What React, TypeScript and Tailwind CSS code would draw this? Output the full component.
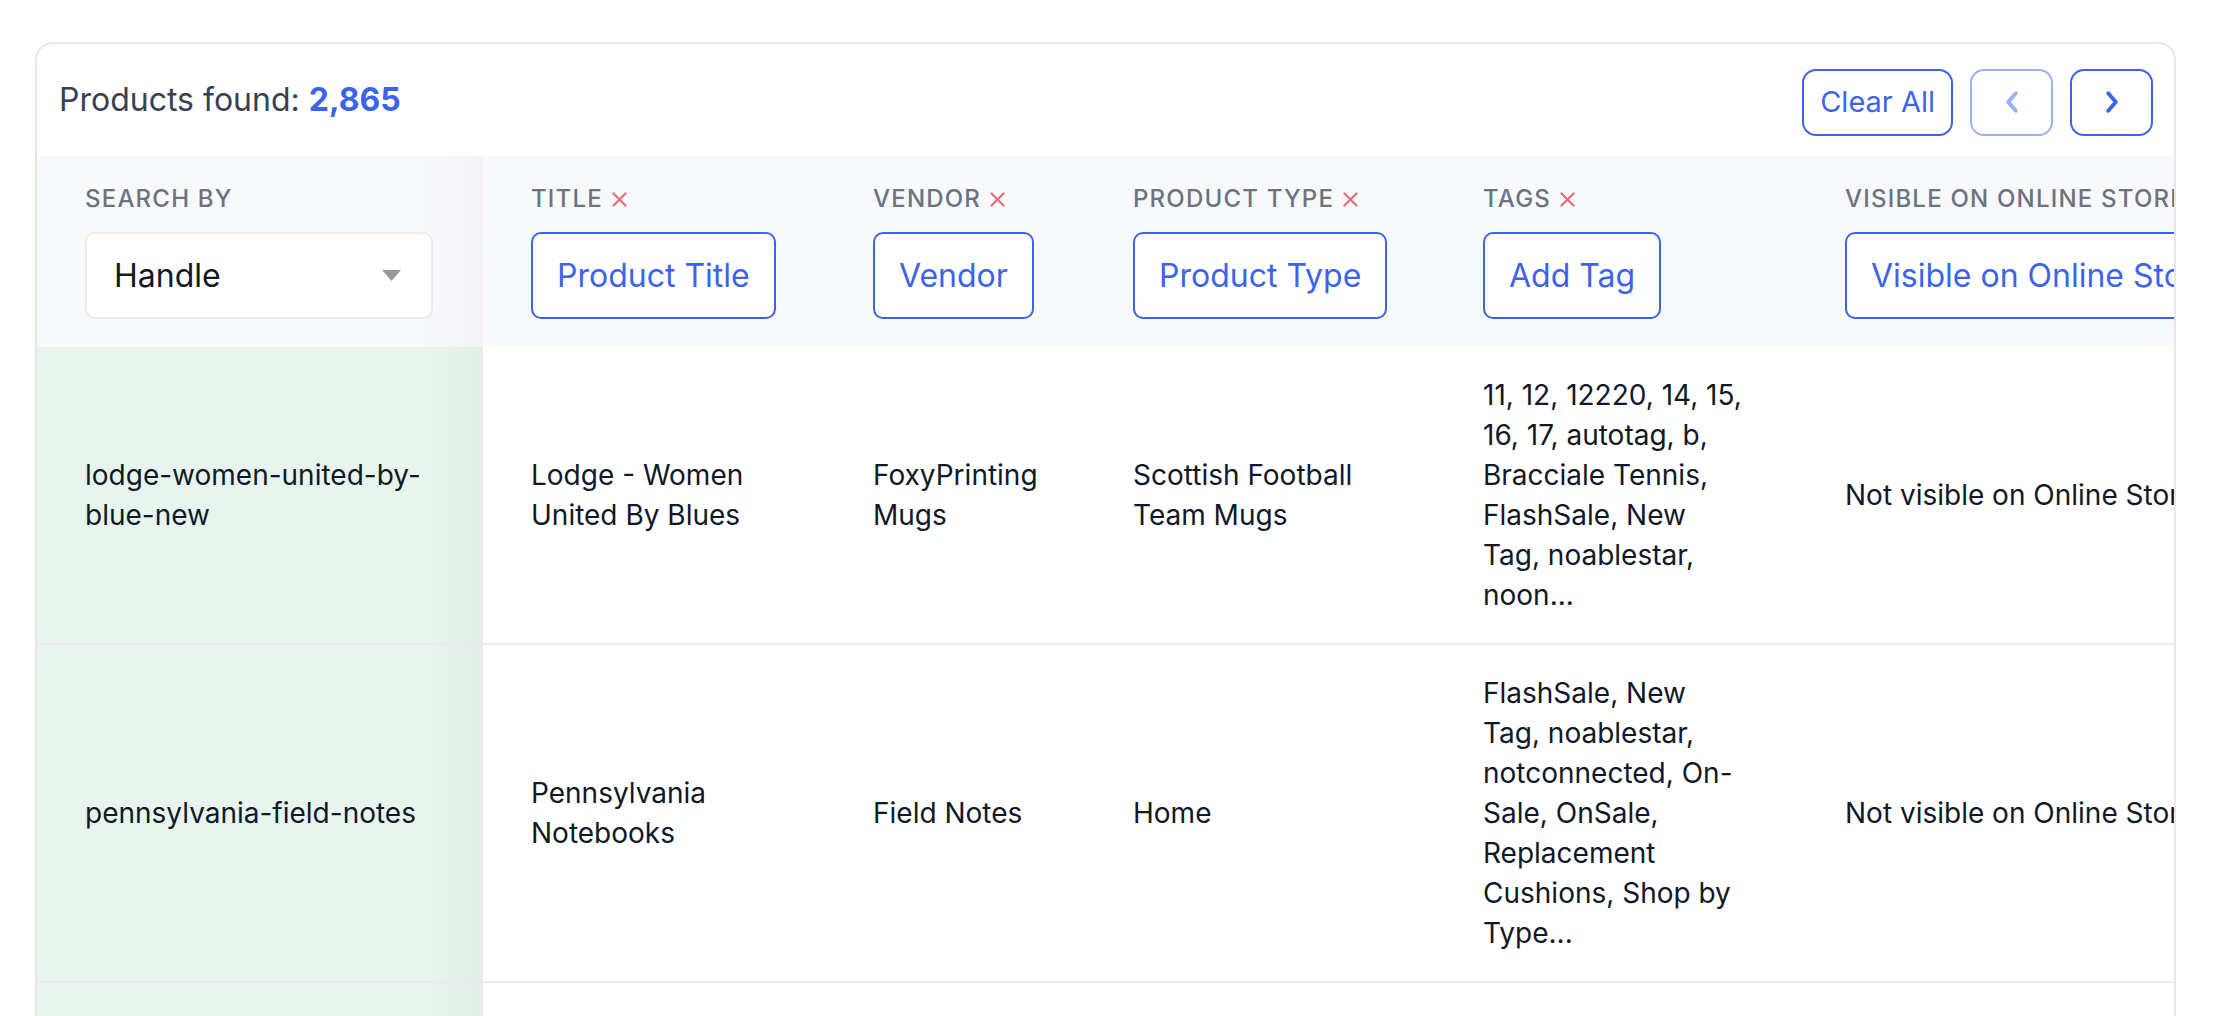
import React from "react";

const BLUE = "#3d63ea";

function Chevron({ dir }: { dir: "left" | "right" }) {
  return (
    <svg width="16" height="26" viewBox="0 0 14 24" fill="none">
      <path
        d={dir === "left" ? "M10.5 4 L3.5 12 L10.5 20" : "M3.5 4 L10.5 12 L3.5 20"}
        stroke={BLUE}
        strokeWidth="3.6"
        strokeLinecap="round"
        strokeLinejoin="round"
      />
    </svg>
  );
}

function HeadLabel({ text, removable = true }: { text: string; removable?: boolean }) {
  return (
    <div className="flex items-center gap-[9px] text-[24px] leading-[32px] font-medium tracking-[0.05em] text-[#6b7280] uppercase whitespace-nowrap mb-[17px]">
      <span>{text}</span>
      {removable && (
        <svg width="15" height="15" viewBox="0 0 15 15" className="mt-[1px]">
          <path d="M1.5 1.5 L13.5 13.5 M13.5 1.5 L1.5 13.5" stroke="#e36d7d" strokeWidth="2.2" strokeLinecap="round" />
        </svg>
      )}
    </div>
  );
}

function FilterButton({ text }: { text: string }) {
  return (
    <div className="inline-flex items-center h-[87px] px-[24px] border-2 border-[#3d63ea] rounded-[10px] bg-white text-[32px] text-[#3d63ea] whitespace-nowrap">
      {text}
    </div>
  );
}

const rows = [
  {
    handle: "lodge-women-united-by-blue-new",
    title: "Lodge - Women United By Blues",
    vendor: "FoxyPrinting Mugs",
    type: "Scottish Football Team Mugs",
    tags: "11, 12, 12220, 14, 15, 16, 17, autotag, b, Bracciale Tennis, FlashSale, New Tag, noablestar, noon...",
    visible: "Not visible on Online Store",
  },
  {
    handle: "pennsylvania-field-notes",
    title: "Pennsylvania Notebooks",
    vendor: "Field Notes",
    type: "Home",
    tags: "FlashSale, New Tag, noablestar, notconnected, On-Sale, OnSale, Replacement Cushions, Shop by Type...",
    visible: "Not visible on Online Store",
  },
  {
    handle: "classic-leather-tote",
    title: "Classic Leather Tote",
    vendor: "Field Notes",
    type: "Bags",
    tags: "FlashSale, New Tag",
    visible: "Not visible on Online Store",
  },
];

export default function App() {
  return (
    <div className="min-h-screen w-[2216px] bg-white pt-[42px] font-['Inter','Noto_Sans',sans-serif]">
      <div className="ml-[35px] w-[2141px] h-[1100px] border-2 border-[#e7e7ea] rounded-[18px] overflow-hidden bg-white">
        <div className="h-[112px] flex items-center justify-between pl-[22px] pr-[21px]">
          <div className="text-[32px] text-[#374151]">
            Products found: <span className="font-bold text-[#3d63ea]">2,865</span>
          </div>
          <div className="flex items-center gap-[17px] pt-[4px]">
            <div className="h-[67px] px-[16px] flex items-center border-2 border-[#3d63ea] rounded-[14px] text-[29px] text-[#3d63ea]">
              Clear All
            </div>
            <div className="h-[67px] w-[83px] flex items-center justify-center border-2 border-[#3d63ea] rounded-[14px] opacity-50">
              <Chevron dir="left" />
            </div>
            <div className="h-[67px] w-[83px] flex items-center justify-center border-2 border-[#3d63ea] rounded-[14px]">
              <Chevron dir="right" />
            </div>
          </div>
        </div>
        <table className="table-fixed border-collapse w-[2400px]">
          <colgroup>
            <col className="w-[446px]" />
            <col className="w-[342px]" />
            <col className="w-[260px]" />
            <col className="w-[350px]" />
            <col className="w-[362px]" />
            <col className="w-[640px]" />
          </colgroup>
          <thead>
            <tr className="bg-[#f8f9fb]">
              <th className="relative text-left align-top px-[48px] pt-[27px] pb-[28px] font-normal">
                <HeadLabel text="Search by" removable={false} />
                <div className="h-[87px] w-[348px] flex items-center justify-between pl-[27px] pr-[30px] bg-white border-2 border-[#ececee] rounded-[10px]">
                  <span className="text-[32px] text-[#111827]">Handle</span>
                  <svg width="19" height="11" viewBox="0 0 19 11">
                    <path d="M0 0 L19 0 L9.5 11 Z" fill="#999999" />
                  </svg>
                </div>
                <div className="absolute right-0 top-0 bottom-0 w-[60px] bg-linear-to-l from-[rgba(0,0,0,0.025)] to-transparent" />
              </th>
              <th className="text-left align-top px-[48px] pt-[27px] pb-[28px] font-normal">
                <HeadLabel text="Title" />
                <FilterButton text="Product Title" />
              </th>
              <th className="text-left align-top px-[48px] pt-[27px] pb-[28px] font-normal">
                <HeadLabel text="Vendor" />
                <FilterButton text="Vendor" />
              </th>
              <th className="text-left align-top px-[48px] pt-[27px] pb-[28px] font-normal">
                <HeadLabel text="Product Type" />
                <FilterButton text="Product Type" />
              </th>
              <th className="text-left align-top px-[48px] pt-[27px] pb-[28px] font-normal">
                <HeadLabel text="Tags" />
                <FilterButton text="Add Tag" />
              </th>
              <th className="text-left align-top px-[48px] pt-[27px] pb-[28px] font-normal">
                <HeadLabel text="Visible on Online Store" />
                <FilterButton text="Visible on Online Store" />
              </th>
            </tr>
          </thead>
          <tbody>
            {rows.map((r) => (
              <tr key={r.handle}>
                <td className="relative bg-[#e8f5ee] px-[48px] py-[28px] align-middle border-b-2 border-[#ebebef] text-[28px] leading-[40px] text-[#111827] break-words">
                  {r.handle}
                  <div className="absolute right-0 top-0 bottom-0 w-[60px] bg-linear-to-l from-[rgba(0,0,0,0.025)] to-transparent" />
                </td>
                <td className="px-[48px] py-[28px] align-middle border-b-2 border-[#ebebef] text-[28px] leading-[40px] text-[#111827]">
                  {r.title}
                </td>
                <td className="px-[48px] py-[28px] align-middle border-b-2 border-[#ebebef] text-[28px] leading-[40px] text-[#111827]">
                  {r.vendor}
                </td>
                <td className="px-[48px] py-[28px] align-middle border-b-2 border-[#ebebef] text-[28px] leading-[40px] text-[#111827]">
                  {r.type}
                </td>
                <td className="px-[48px] py-[28px] align-middle border-b-2 border-[#ebebef] text-[28px] leading-[40px] text-[#111827]">
                  {r.tags}
                </td>
                <td className="px-[48px] py-[28px] align-middle border-b-2 border-[#ebebef] text-[28px] leading-[40px] text-[#111827] whitespace-nowrap">
                  {r.visible}
                </td>
              </tr>
            ))}
          </tbody>
        </table>
      </div>
    </div>
  );
}
